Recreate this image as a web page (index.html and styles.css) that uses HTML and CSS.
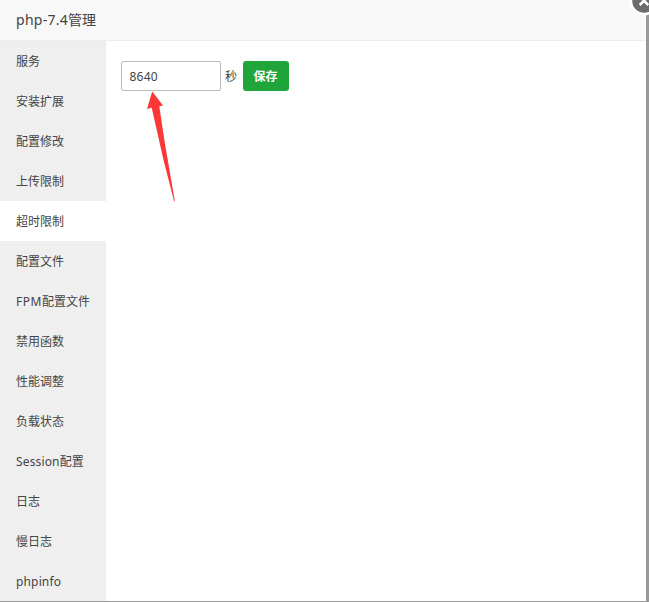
FILE: index.html
```html
<!DOCTYPE html>
<html lang="zh-CN">
<head>
<meta charset="utf-8">
<title>php-7.4管理</title>
<link rel="stylesheet" href="styles.css">
</head>
<body>
<main class="dialog">
  <header class="title"><span class="latin">php-7.4</span>管理</header>
  <div class="body">
    <nav class="menu">
      <a>服务</a>
      <a>安装扩展</a>
      <a>配置修改</a>
      <a>上传限制</a>
      <a class="active">超时限制</a>
      <a>配置文件</a>
      <a><span class="latin wide">FPM</span>配置文件</a>
      <a>禁用函数</a>
      <a>性能调整</a>
      <a>负载状态</a>
      <a><span class="latin">Session</span>配置</a>
      <a>日志</a>
      <a>慢日志</a>
      <a><span class="latin">phpinfo</span></a>
    </nav>
    <section class="content">
      <form class="row">
        <input class="field" type="text" value="8640" aria-label="超时限制">
        <span class="unit">秒</span>
        <button class="save" type="button">保存</button>
      </form>
    </section>
  </div>
</main>
<svg class="arrow" width="31" height="113" viewBox="0 0 31 113"><path d="M7.200 1.500L18 15.500L14.300 16.300L19.500 51L29.900 111.500L29 111L18.500 70L6.700 17.700L2 19Z"/></svg>
<svg class="close" width="30" height="30" viewBox="0 0 30 30"><circle cx="15" cy="15" r="13"/><path d="M10.500 10.200L19.300 19M19.500 10.200L10.700 19"/></svg>
</body>
</html>
```
FILE: styles.css
```css
* { box-sizing: border-box; }
body {
  margin: 0;
  width: 649px;
  height: 602px;
  padding: 0 3px 1px 0;
  overflow: hidden;
  position: relative;
  background: #999;
  color: #444;
  font: 12px "Noto Sans", "Noto Sans CJK SC", sans-serif;
}
.dialog {
  height: 601px;
  display: flex;
  flex-direction: column;
  background: #fff;
}
.title {
  height: 41px;
  padding-left: 16px;
  border-bottom: 1px solid #eee;
  background: #f8f8f8;
  font-size: 14px;
  line-height: 40px;
}
.latin { letter-spacing: 0.15px; }
.title .latin { letter-spacing: 0.28px; }
.menu .wide { letter-spacing: 0.5px; }
.body {
  flex: 1;
  min-height: 0;
  display: flex;
}
.menu {
  width: 106px;
  flex: none;
  overflow: hidden;
  background: #efefef;
}
.menu a {
  display: block;
  height: 40px;
  padding-left: 16px;
  line-height: 42px;
  white-space: nowrap;
}
.menu .active { background: #fff; }
.content { padding: 20px 15px; }
.row {
  display: flex;
  align-items: center;
  height: 30px;
}
.field {
  width: 100px;
  height: 30px;
  padding: 0 7.5px;
  border: 1px solid #bbb;
  border-radius: 2px;
  background: #fff;
  color: #444;
  font: inherit;
  letter-spacing: 0.2px;
}
.unit { margin: 0 6px 0 4px; }
.save {
  width: 46px;
  height: 30px;
  padding: 0 1px 0 0;
  border: 0;
  border-radius: 3px;
  background: #20a53a;
  color: #fff;
  font: inherit;
  font-weight: 700;
}
.arrow {
  position: absolute;
  left: 145px;
  top: 90px;
  fill: #fb3838;
}
.close {
  position: absolute;
  left: 629px;
  top: -14px;
}
.close circle {
  fill: #6c6c6c;
  stroke: #fff;
  stroke-width: 2.5;
}
.close path {
  fill: none;
  stroke: #fff;
  stroke-width: 2.5;
}
```
